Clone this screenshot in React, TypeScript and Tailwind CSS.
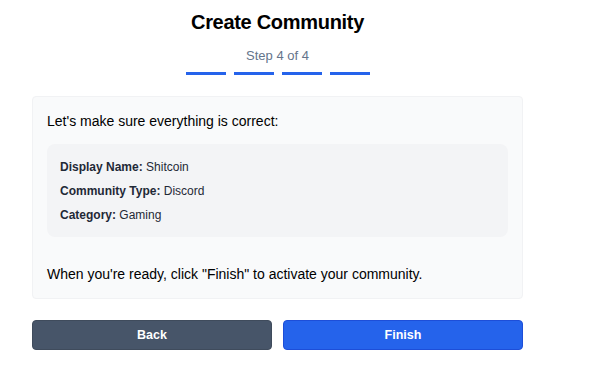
import React from "react";

export default function App() {
  return (
    <div className="w-[600px] h-[380px] bg-white" style={{ fontFamily: "'Liberation Sans', Arial, sans-serif" }}>
      <div className="ml-[32px] w-[491px] pt-[8px] flex flex-col">
        <h1 className="text-center text-[20px] leading-[28px] font-bold text-black tracking-[-0.3px]">Create Community</h1>
        <div className="mt-[12px] text-center text-[13px] leading-[16px] text-[#64748b]">Step 4 of 4</div>
        <div className="mt-[8px] flex justify-center gap-2">
          <div className="w-10 h-[3px] bg-[#2563eb]" />
          <div className="w-10 h-[3px] bg-[#2563eb]" />
          <div className="w-10 h-[3px] bg-[#2563eb]" />
          <div className="w-10 h-[3px] bg-[#2563eb]" />
        </div>
        <div className="mt-[21px] h-[203px] bg-[#f9fafb] border border-[#f1f2f4] rounded-[4px] px-[14px] pt-[14px] flex flex-col">
          <p className="text-[14px] leading-[20px] text-black">Let's make sure everything is correct:</p>
          <div className="mt-[13px] bg-[#f3f4f6] rounded-lg px-[13px] pt-[13px] pb-[12px] flex flex-col gap-[4px] text-[12px] leading-[20px] text-[#1f2937]">
            <div><span className="font-bold">Display Name:</span> Shitcoin</div>
            <div><span className="font-bold">Community Type:</span> Discord</div>
            <div><span className="font-bold">Category:</span> Gaming</div>
          </div>
          <p className="mt-[27px] text-[14px] leading-[20px] text-black">When you're ready, click "Finish" to activate your community.</p>
        </div>
        <div className="mt-[21px] flex gap-[11px]">
          <button className="flex-1 h-[30px] rounded-[4px] bg-[#475569] text-white text-[12.5px] font-bold border border-[#3f4b5c]">Back</button>
          <button className="flex-1 h-[30px] rounded-[4px] bg-[#2563eb] text-white text-[12.5px] font-bold border border-[#1d4ed8]">Finish</button>
        </div>
      </div>
    </div>
  );
}
